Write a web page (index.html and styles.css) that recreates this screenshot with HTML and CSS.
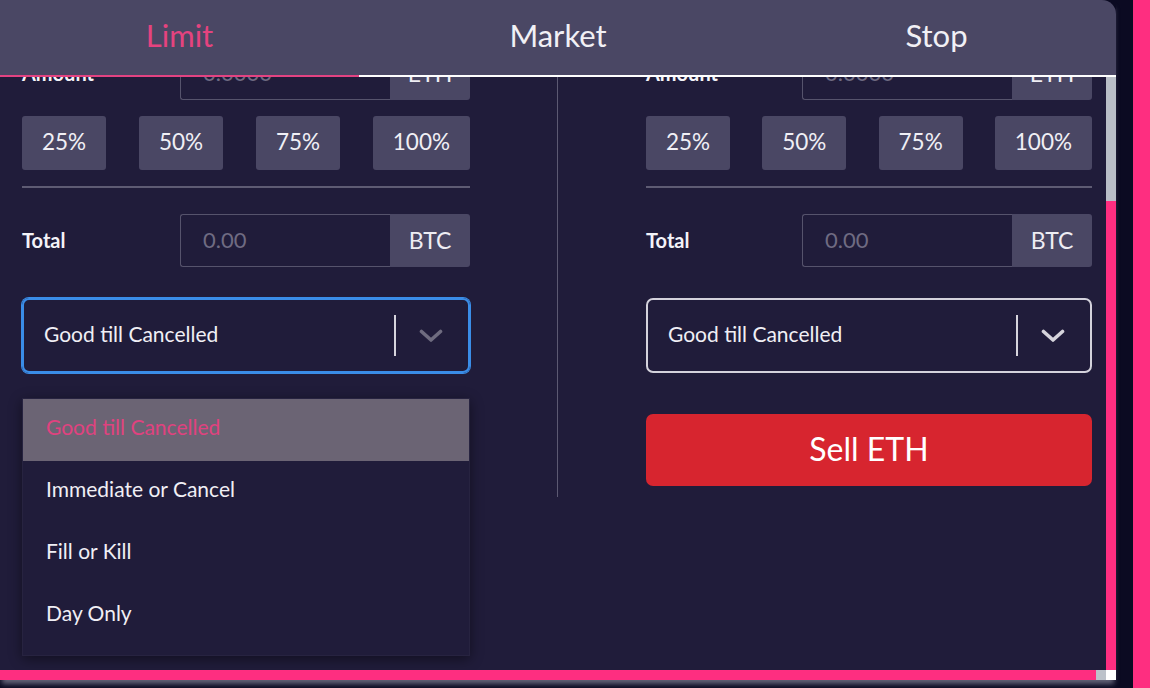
FILE: index.html
```html
<!DOCTYPE html>
<html lang="en">

<head>
    <meta charset="UTF-8">
    <meta name="viewport" content="width=device-width, initial-scale=1.0">
    <title>Place Order</title>
    <link rel="stylesheet" href="styles.css">
</head>

<body>

    <div class="trade-panel">
        <nav class="order-tabs">
            <a href="javascript:void(0);" class="tab active">Limit</a>
            <a href="javascript:void(0);" class="tab tab-wide">Market</a>
            <a href="javascript:void(0);" class="tab">Stop</a>
        </nav>

        <div class="order-body">
            <div class="body-main">
                <div class="scroll-view">
                    <div class="order-form">

                        <!-- buy side -->
                        <div class="order-side buy-side">
                            <div class="field-row">
                                <label class="field-label">Amount</label>
                                <div class="input-group">
                                    <input class="field-input" type="text" placeholder="0.0000">
                                    <span class="addon">ETH</span>
                                </div>
                            </div>
                            <div class="percent-row">
                                <button class="percent-btn">25%</button>
                                <button class="percent-btn">50%</button>
                                <button class="percent-btn">75%</button>
                                <button class="percent-btn">100%</button>
                            </div>
                            <hr class="field-sep">
                            <div class="field-row total-row">
                                <label class="field-label">Total</label>
                                <div class="input-group">
                                    <input class="field-input" type="text" placeholder="0.00">
                                    <span class="addon">BTC</span>
                                </div>
                            </div>
                            <div class="tif-field">
                                <div class="tif-select focused">
                                    <span class="tif-value">Good till Cancelled</span>
                                    <span class="tif-sep"></span>
                                    <svg class="tif-chevron" viewBox="0 0 24 14"><polyline points="2.5,2.5 12,11 21.5,2.5"/></svg>
                                </div>
                                <ul class="tif-menu">
                                    <li class="selected">Good till Cancelled</li>
                                    <li>Immediate or Cancel</li>
                                    <li>Fill or Kill</li>
                                    <li>Day Only</li>
                                </ul>
                            </div>
                        </div>

                        <div class="form-divider"></div>

                        <!-- sell side -->
                        <div class="order-side sell-side">
                            <div class="field-row">
                                <label class="field-label">Amount</label>
                                <div class="input-group">
                                    <input class="field-input" type="text" placeholder="0.0000">
                                    <span class="addon">ETH</span>
                                </div>
                            </div>
                            <div class="percent-row">
                                <button class="percent-btn">25%</button>
                                <button class="percent-btn">50%</button>
                                <button class="percent-btn">75%</button>
                                <button class="percent-btn">100%</button>
                            </div>
                            <hr class="field-sep">
                            <div class="field-row total-row">
                                <label class="field-label">Total</label>
                                <div class="input-group">
                                    <input class="field-input" type="text" placeholder="0.00">
                                    <span class="addon">BTC</span>
                                </div>
                            </div>
                            <div class="tif-field">
                                <div class="tif-select">
                                    <span class="tif-value">Good till Cancelled</span>
                                    <span class="tif-sep"></span>
                                    <svg class="tif-chevron" viewBox="0 0 24 14"><polyline points="2.5,2.5 12,11 21.5,2.5"/></svg>
                                </div>
                            </div>
                            <button class="sell-btn">Sell ETH</button>
                        </div>

                    </div>
                </div>
                <div class="v-scrollbar">
                    <div class="v-thumb"></div>
                </div>
            </div>
            <div class="h-scrollbar">
                <div class="h-track"></div>
                <div class="h-thumb"></div>
                <div class="scroll-corner"></div>
            </div>
        </div>
    </div>

    <div class="edge-strip"></div>

</body>

</html>
```

FILE: styles.css
```css
* {
    margin: 0;
    padding: 0;
    box-sizing: border-box;
    font-family: Lato, "Open Sans", sans-serif;
}


body {
    background-color: #0b0a22;
    color: #f0eff5;
    display: flex;
    height: 688px;
    overflow: hidden;
}


.trade-panel {
    width: 1116px;
    height: 680px;
    display: flex;
    flex-direction: column;
    box-shadow: 0 6px 5px -2px rgba(130, 128, 150, 0.75);
}


.edge-strip {
    flex: 1;
    margin-left: 17px;
    background-color: #fe2e80;
}


/* tabs */

.order-tabs {
    display: flex;
    height: 77px;
    background-color: #4a4764;
    border-top-right-radius: 14px;
}


.tab {
    width: 359px;
    display: flex;
    align-items: center;
    justify-content: center;
    padding-bottom: 6px;
    font-size: 31px;
    color: #f1f0f5;
    text-decoration: none;
    border-bottom: 2px solid #ffffff;
}


.tab-wide {
    width: 398px;
}


.tab.active {
    color: #e5437f;
    border-bottom-color: #e34382;
}


/* scroll area */

.order-body {
    flex: 1;
    display: flex;
    flex-direction: column;
    min-height: 0;
}


.body-main {
    flex: 1;
    display: flex;
    min-height: 0;
}


.scroll-view {
    flex: 1;
    overflow: hidden;
    background-color: #201c3a;
}


.v-scrollbar {
    width: 10px;
    background-color: #fe2e80;
}


.v-thumb {
    height: 124px;
    background-color: #b9bec7;
}


.h-scrollbar {
    display: flex;
    height: 10px;
}


.h-track {
    flex: 1;
    background-color: #fe2e80;
}


.h-thumb {
    width: 10px;
    background-color: #bcc2ca;
}


.scroll-corner {
    width: 10px;
    background-color: #ffffff;
}


/* form */

.order-form {
    display: flex;
    margin-top: -30px;
    padding: 0 14px 0 22px;
}


.order-side {
    padding-bottom: 11px;
}


.buy-side {
    flex: 0 0 448px;
}


.sell-side {
    flex: 1;
}


.form-divider {
    width: 1px;
    margin: 0 88px 0 87px;
    background-color: #5c5972;
}


.field-row {
    display: flex;
    align-items: center;
    height: 53px;
}


.field-label {
    flex: 1;
    padding-bottom: 2px;
    font-size: 20px;
    font-weight: 700;
    color: #f4f3f8;
}


.input-group {
    display: flex;
    width: 290px;
    height: 53px;
}


.field-input {
    width: 210px;
    height: 100%;
    background-color: transparent;
    border: 1px solid #56536c;
    border-right: none;
    border-radius: 3px 0 0 3px;
    padding: 0 22px 2px;
    font-size: 22px;
    color: #f0eff5;
    outline: none;
}


.field-input::placeholder {
    color: #6f6b82;
}


.addon {
    flex: 1;
    display: flex;
    align-items: center;
    justify-content: center;
    padding-bottom: 2px;
    background-color: #4a4764;
    border-radius: 0 3px 3px 0;
    font-size: 23px;
    color: #eeedf3;
}


.percent-row {
    display: flex;
    justify-content: space-between;
    margin-top: 16px;
}


.percent-btn {
    height: 54px;
    padding: 0 20px 3px;
    border: none;
    border-radius: 3px;
    background-color: #4a4764;
    color: #f0eff5;
    font-size: 22.5px;
    cursor: pointer;
}


.field-sep {
    margin-top: 16px;
    height: 2px;
    border: none;
    background-color: #5e5b73;
}


.total-row {
    margin-top: 26px;
}


/* time in force select */

.tif-field {
    position: relative;
    margin-top: 31px;
}


.tif-select {
    display: flex;
    align-items: center;
    height: 75px;
    padding: 0 25px 0 20px;
    border: 2px solid #d4d2dc;
    border-radius: 7px;
}


.tif-select.focused {
    border-color: #3a8de8;
    box-shadow: 0 0 0 1px #3a8de8;
}


.tif-value {
    flex: 1;
    padding-bottom: 5px;
    font-size: 21px;
    color: #f0eff5;
}


.tif-sep {
    width: 2px;
    height: 41px;
    background-color: #d6d4dc;
}


.tif-chevron {
    width: 24px;
    height: 14px;
    margin-left: 23px;
    fill: none;
    stroke: #d6d4dc;
    stroke-width: 3.6;
    stroke-linecap: round;
    stroke-linejoin: round;
}


.focused .tif-chevron {
    stroke: #6f6c80;
}


.tif-menu {
    position: absolute;
    top: calc(100% + 25px);
    left: 0;
    right: 0;
    list-style: none;
    padding-bottom: 8px;
    background-color: #201c3a;
    border: 1px solid rgba(255, 255, 255, 0.03);
    box-shadow: 0 3px 12px rgba(0, 0, 0, 0.45);
}


.tif-menu li {
    height: 62px;
    display: flex;
    align-items: center;
    padding: 0 0 8px 23px;
    font-size: 21px;
    color: #f0eff5;
}


.tif-menu li.selected {
    background-color: #6b6474;
    color: #e0427f;
}


.sell-btn {
    width: 100%;
    height: 72px;
    margin-top: 41px;
    padding-bottom: 3px;
    border: none;
    border-radius: 7px;
    background-color: #d7252f;
    color: #ffffff;
    font-size: 32px;
    cursor: pointer;
}
```
